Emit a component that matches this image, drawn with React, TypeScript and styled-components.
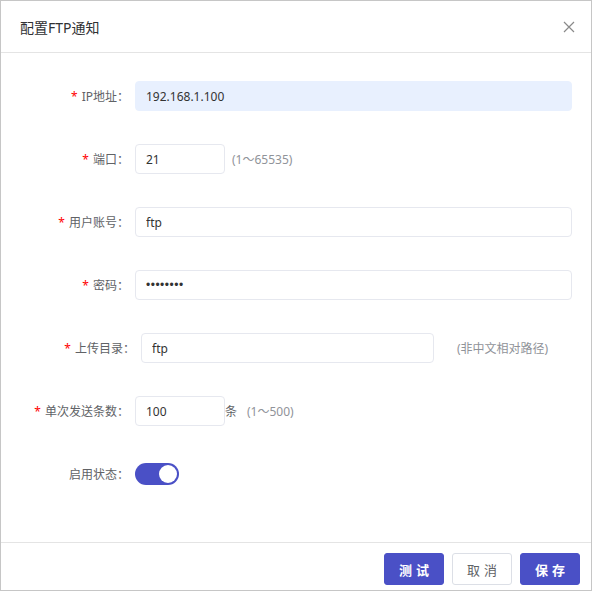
import React, {useState} from 'react';
import styled, {createGlobalStyle} from 'styled-components';

const GlobalStyle = createGlobalStyle`
  html, body {
    margin: 0;
    padding: 0;
    background: #fff;
  }
  body {
    font-family: "Noto Sans", "Noto Sans CJK SC", sans-serif;
  }
`;

const Dialog = styled.div`
  box-sizing: border-box;
  width: 592px;
  height: 591px;
  border: 1px solid #c6c6c6;
  display: flex;
  flex-direction: column;
  background: #fff;
`;

const Header = styled.div`
  height: 51px;
  flex: 0 0 auto;
  display: flex;
  align-items: center;
  justify-content: space-between;
  padding: 0 14px 0 19px;
  border-bottom: 1px solid #e4e4e4;
`;

const Title = styled.div`
  font-size: 14px;
  color: #303133;
`;

const CloseButton = styled.button`
  border: none;
  background: none;
  padding: 0;
  width: 16px;
  height: 16px;
  display: flex;
  align-items: center;
  justify-content: center;
  cursor: pointer;
`;

const Body = styled.div`
  flex: 1 1 auto;
  padding: 28px 19px 0 0;
  display: flex;
  flex-direction: column;
  gap: 33px;
`;

const Row = styled.div`
  display: flex;
  align-items: center;
  height: 30px;
`;

const Label = styled.label<{$extra?: number}>`
  flex: 0 0 auto;
  width: ${p => 128 + (p.$extra || 0)}px;
  margin-right: 6px;
  text-align: right;
  font-size: 12px;
  color: #606266;
  white-space: nowrap;
`;

const Star = styled.span`
  color: #f00;
  margin-right: 4px;
`;

const Input = styled.input<{$width?: number; $filled?: boolean}>`
  box-sizing: border-box;
  height: 30px;
  width: ${p => (p.$width ? `${p.$width}px` : 'auto')};
  flex: ${p => (p.$width ? '0 0 auto' : '1 1 auto')};
  border: 1px solid ${p => (p.$filled ? '#e8f0fe' : '#e6e8ef')};
  background: ${p => (p.$filled ? '#e8f0fe' : '#fff')};
  border-radius: 4px;
  padding: 0 10px;
  font-family: "Noto Sans", "Noto Sans CJK SC", sans-serif;
  font-size: 12px;
  color: #333;
  outline: none;

  &[type="password"] {
    font-family: "Liberation Sans", sans-serif;
    font-size: 12px;
    letter-spacing: 0.5px;
  }
`;

const Hint = styled.span<{$gap?: number}>`
  margin-left: ${p => p.$gap || 0}px;
  font-size: 12px;
  color: #909399;
  white-space: nowrap;
`;

const Unit = styled.span`
  font-size: 12px;
  color: #606266;
`;

const Switch = styled.button<{$on: boolean}>`
  position: relative;
  width: 44px;
  height: 22px;
  border: none;
  border-radius: 11px;
  padding: 0;
  background: ${p => (p.$on ? '#4a50c6' : '#dcdfe6')};
  cursor: pointer;

  &::after {
    content: '';
    position: absolute;
    top: 2px;
    left: ${p => (p.$on ? '24px' : '2px')};
    width: 18px;
    height: 18px;
    border-radius: 50%;
    background: #fff;
  }
`;

const Footer = styled.div`
  flex: 0 0 auto;
  border-top: 1px solid #e4e4e4;
  display: flex;
  justify-content: flex-end;
  gap: 8px;
  padding: 10px 11px 5px 0;
`;

const Button = styled.button<{$primary?: boolean}>`
  box-sizing: border-box;
  width: 60px;
  height: 32px;
  border-radius: 3px;
  border: 1px solid ${p => (p.$primary ? '#4a50c6' : '#dcdfe6')};
  background: ${p => (p.$primary ? '#4a50c6' : '#fff')};
  color: ${p => (p.$primary ? '#fff' : '#606266')};
  font-family: "Noto Sans CJK SC", sans-serif;
  font-size: 13px;
  font-weight: ${p => (p.$primary ? 700 : 400)};
  letter-spacing: 4px;
  text-indent: 4px;
  cursor: pointer;
`;

export default function App() {
  const [enabled, setEnabled] = useState(true);
  return (
    <>
      <GlobalStyle/>
      <Dialog>
        <Header>
          <Title>配置FTP通知</Title>
          <CloseButton aria-label="close">
            <svg width="12" height="12" viewBox="0 0 12 12">
              <path d="M1 1L11 11M11 1L1 11" stroke="#8a8a8a" strokeWidth="1.2"/>
            </svg>
          </CloseButton>
        </Header>
        <Body>
          <Row>
            <Label><Star>*</Star>IP地址：</Label>
            <Input $filled defaultValue="192.168.1.100"/>
          </Row>
          <Row>
            <Label><Star>*</Star>端口：</Label>
            <Input $width={90} defaultValue="21"/>
            <Hint $gap={7}>(1～65535)</Hint>
          </Row>
          <Row>
            <Label><Star>*</Star>用户账号：</Label>
            <Input defaultValue="ftp"/>
          </Row>
          <Row>
            <Label><Star>*</Star>密码：</Label>
            <Input type="password" defaultValue="12345678"/>
          </Row>
          <Row>
            <Label $extra={6}><Star>*</Star>上传目录：</Label>
            <Input $width={293} defaultValue="ftp"/>
            <Hint $gap={23}>(非中文相对路径)</Hint>
          </Row>
          <Row>
            <Label><Star>*</Star>单次发送条数：</Label>
            <Input $width={90} defaultValue="100"/>
            <Unit>条</Unit>
            <Hint $gap={10}>(1～500)</Hint>
          </Row>
          <Row>
            <Label>启用状态：</Label>
            <Switch $on={enabled} onClick={() => setEnabled(!enabled)} aria-label="toggle"/>
          </Row>
        </Body>
        <Footer>
          <Button $primary>测试</Button>
          <Button>取消</Button>
          <Button $primary>保存</Button>
        </Footer>
      </Dialog>
    </>
  );
}
